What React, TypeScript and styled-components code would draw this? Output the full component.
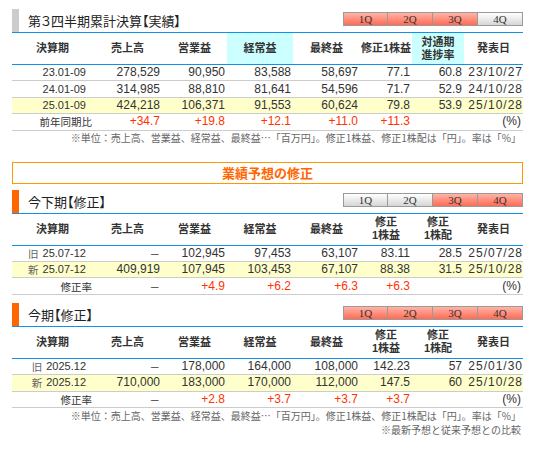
import React from 'react';
import styled, { createGlobalStyle } from 'styled-components';

const JP = `"Noto Sans CJK JP", sans-serif`;
const NUM = `"Liberation Sans Narrow", "Liberation Sans", "Noto Sans CJK JP", sans-serif`;
const HEAD = `"Liberation Sans", "Noto Sans CJK JP", sans-serif`;
const BLUE = '#0f93e6';
const COLS = '81px 69px 65px 66px 67px 52px 52px 59px';

const Global = createGlobalStyle`
  html, body { margin: 0; padding: 0; background: #fff; }
  body { font-family: ${JP}; color: #333; }
`;

const Page = styled.div`
  width: 511px;
  padding: 9px 0 0 12px;
`;

const Section = styled.section<{ $gap: number }>`
  margin-top: ${p => p.$gap}px;
`;

const TitleRow = styled.div`
  display: flex;
  height: 23px;
  border-bottom: 1px solid ${BLUE};
`;

const Accent = styled.span<{ $color: string }>`
  flex: none;
  width: 7px;
  background: ${p => p.$color};
`;

const Title = styled.h2`
  margin: 0 0 0 9px;
  font: 400 13px/23px ${JP};
  font-feature-settings: "palt";
  color: #222;
`;

const QTabs = styled.div`
  display: flex;
  margin-left: auto;
  align-self: flex-start;
  margin-top: 3px;
`;

const QButton = styled.span<{ $on: boolean }>`
  box-sizing: border-box;
  width: 45px;
  height: 14px;
  border: 1px solid #9a9a9a;
  & + & { border-left: none; }
  font: 400 11px/12px "Liberation Serif", serif;
  text-align: center;
  color: #333;
  background: ${p => (p.$on ? 'linear-gradient(#ffb4a6, #ff6b55)' : 'linear-gradient(#ffffff, #d6d6d6)')};
`;

const HeadRow = styled.div`
  display: grid;
  grid-template-columns: ${COLS};
  height: 31px;
  border-bottom: 1px solid ${BLUE};
`;

const Th = styled.div<{ $hl?: boolean }>`
  display: flex;
  align-items: center;
  justify-content: center;
  text-align: center;
  font: 700 11px/13px ${HEAD};
  color: #333;
  background: ${p => (p.$hl ? '#ccffff' : 'transparent')};
`;

const Row = styled.div<{ $hl?: boolean }>`
  display: grid;
  grid-template-columns: ${COLS};
  height: 15.4px;
  border-bottom: 1px solid #cccccc;
  background: ${p => (p.$hl ? '#ffffcc' : 'transparent')};
`;

const Td = styled.div<{ $red?: boolean; $date?: boolean; $first?: boolean }>`
  display: flex;
  align-items: center;
  justify-content: flex-end;
  padding-right: ${p => (p.$first ? 1 : p.$date ? 0 : 2)}px;
  font: 400 12px/15px ${NUM};
  letter-spacing: ${p => (p.$date ? '1px' : '0')};
  color: ${p => (p.$red ? '#ff3300' : '#333')};
  white-space: nowrap;
`;

const Label = styled.span`
  font: 400 10.5px/15px ${JP};
  color: #333;
`;

const Prefix = styled.span`
  font: 400 10.5px/15px ${JP};
  color: #666;
  margin-right: 4px;
`;

const Period = styled.span`
  font: 400 11px/15px ${NUM};
  margin-right: 6px;
`;

const Notes = styled.div<{ $gap: number }>`
  padding-top: ${p => p.$gap}px;
`;

const Note = styled.p`
  margin: 0;
  padding-right: 2px;
  text-align: right;
  font: 400 10px/14px ${JP};
  color: #666;
`;

const Banner = styled.div`
  box-sizing: border-box;
  margin-top: 17px;
  height: 22px;
  border: 1px solid #ff9900;
  display: flex;
  align-items: center;
  justify-content: center;
  font: 700 13px/1 ${JP};
  color: #ff6600;
`;

type DataRow = {
  prefix?: string;
  period?: string;
  label?: string;
  hl?: boolean;
  red?: boolean;
  cells: string[];
};

type Head = { text: string[]; hl?: boolean };

const Q = ['1Q', '2Q', '3Q', '4Q'];

function Block(props: {
  gap: number;
  accent: string;
  title: string;
  on: boolean[];
  heads: Head[];
  rows: DataRow[];
}) {
  return (
    <Section $gap={props.gap}>
      <TitleRow>
        <Accent $color={props.accent} />
        <Title>{props.title}</Title>
        <QTabs>
          {Q.map((q, i) => (
            <QButton key={q} $on={props.on[i]}>{q}</QButton>
          ))}
        </QTabs>
      </TitleRow>
      <HeadRow>
        {props.heads.map((h, i) => (
          <Th key={i} $hl={h.hl}>
            <span>
              {h.text.map((t, j) => (
                <React.Fragment key={j}>
                  {j > 0 && <br />}
                  {t}
                </React.Fragment>
              ))}
            </span>
          </Th>
        ))}
      </HeadRow>
      {props.rows.map((r, i) => (
        <Row key={i} $hl={r.hl}>
          <Td $first>
            {r.label ? (
              <Label>{r.label}</Label>
            ) : (
              <>
                {r.prefix && <Prefix>{r.prefix}</Prefix>}
                <Period>{r.period}</Period>
              </>
            )}
          </Td>
          {r.cells.map((c, j) => {
            const isDate = j === 6;
            if (c === '－') {
              return (
                <Td key={j}>
                  <Label>－</Label>
                </Td>
              );
            }
            return (
              <Td key={j} $date={isDate && c !== '(%)'} $red={r.red && !isDate}>
                {c}
              </Td>
            );
          })}
        </Row>
      ))}
    </Section>
  );
}

const heads1: Head[] = [
  { text: ['決算期'] },
  { text: ['売上高'] },
  { text: ['営業益'] },
  { text: ['経常益'], hl: true },
  { text: ['最終益'] },
  { text: ['修正1株益'] },
  { text: ['対通期', '進捗率'], hl: true },
  { text: ['発表日'] },
];

const heads2: Head[] = [
  { text: ['決算期'] },
  { text: ['売上高'] },
  { text: ['営業益'] },
  { text: ['経常益'] },
  { text: ['最終益'] },
  { text: ['修正', '1株益'] },
  { text: ['修正', '1株配'] },
  { text: ['発表日'] },
];

const rows1: DataRow[] = [
  { period: '23.01-09', cells: ['278,529', '90,950', '83,588', '58,697', '77.1', '60.8', '23/10/27'] },
  { period: '24.01-09', cells: ['314,985', '88,810', '81,641', '54,596', '71.7', '52.9', '24/10/28'] },
  { period: '25.01-09', hl: true, cells: ['424,218', '106,371', '91,553', '60,624', '79.8', '53.9', '25/10/28'] },
  { label: '前年同期比', red: true, cells: ['+34.7', '+19.8', '+12.1', '+11.0', '+11.3', '', '(%)'] },
];

const rows2: DataRow[] = [
  { prefix: '旧', period: '25.07-12', cells: ['－', '102,945', '97,453', '63,107', '83.11', '28.5', '25/07/28'] },
  { prefix: '新', period: '25.07-12', hl: true, cells: ['409,919', '107,945', '103,453', '67,107', '88.38', '31.5', '25/10/28'] },
  { label: '修正率', red: true, cells: ['－', '+4.9', '+6.2', '+6.3', '+6.3', '', '(%)'] },
];

const rows3: DataRow[] = [
  { prefix: '旧', period: '2025.12', cells: ['－', '178,000', '164,000', '108,000', '142.23', '57', '25/01/30'] },
  { prefix: '新', period: '2025.12', hl: true, cells: ['710,000', '183,000', '170,000', '112,000', '147.5', '60', '25/10/28'] },
  { label: '修正率', red: true, cells: ['－', '+2.8', '+3.7', '+3.7', '+3.7', '', '(%)'] },
];

const UNIT_NOTE = '※単位：売上高、営業益、経常益、最終益…「百万円」。修正1株益、修正1株配は「円」。率は「%」';

export default function App() {
  return (
    <>
      <Global />
      <Page>
        <Block
          gap={0}
          accent="#cccccc"
          title="第３四半期累計決算【実績】"
          on={[true, true, true, false]}
          heads={heads1}
          rows={rows1}
        />
        <Notes $gap={0}>
          <Note>{UNIT_NOTE}</Note>
        </Notes>
        <Banner>業績予想の修正</Banner>
        <Block
          gap={6}
          accent="#ff6600"
          title="今下期【修正】"
          on={[false, false, true, true]}
          heads={heads2}
          rows={rows2}
        />
        <Block
          gap={8}
          accent="#ff6600"
          title="今期【修正】"
          on={[true, true, true, true]}
          heads={heads2}
          rows={rows3}
        />
        <Notes $gap={1}>
          <Note>{UNIT_NOTE}</Note>
          <Note>※最新予想と従来予想との比較</Note>
        </Notes>
      </Page>
    </>
  );
}
